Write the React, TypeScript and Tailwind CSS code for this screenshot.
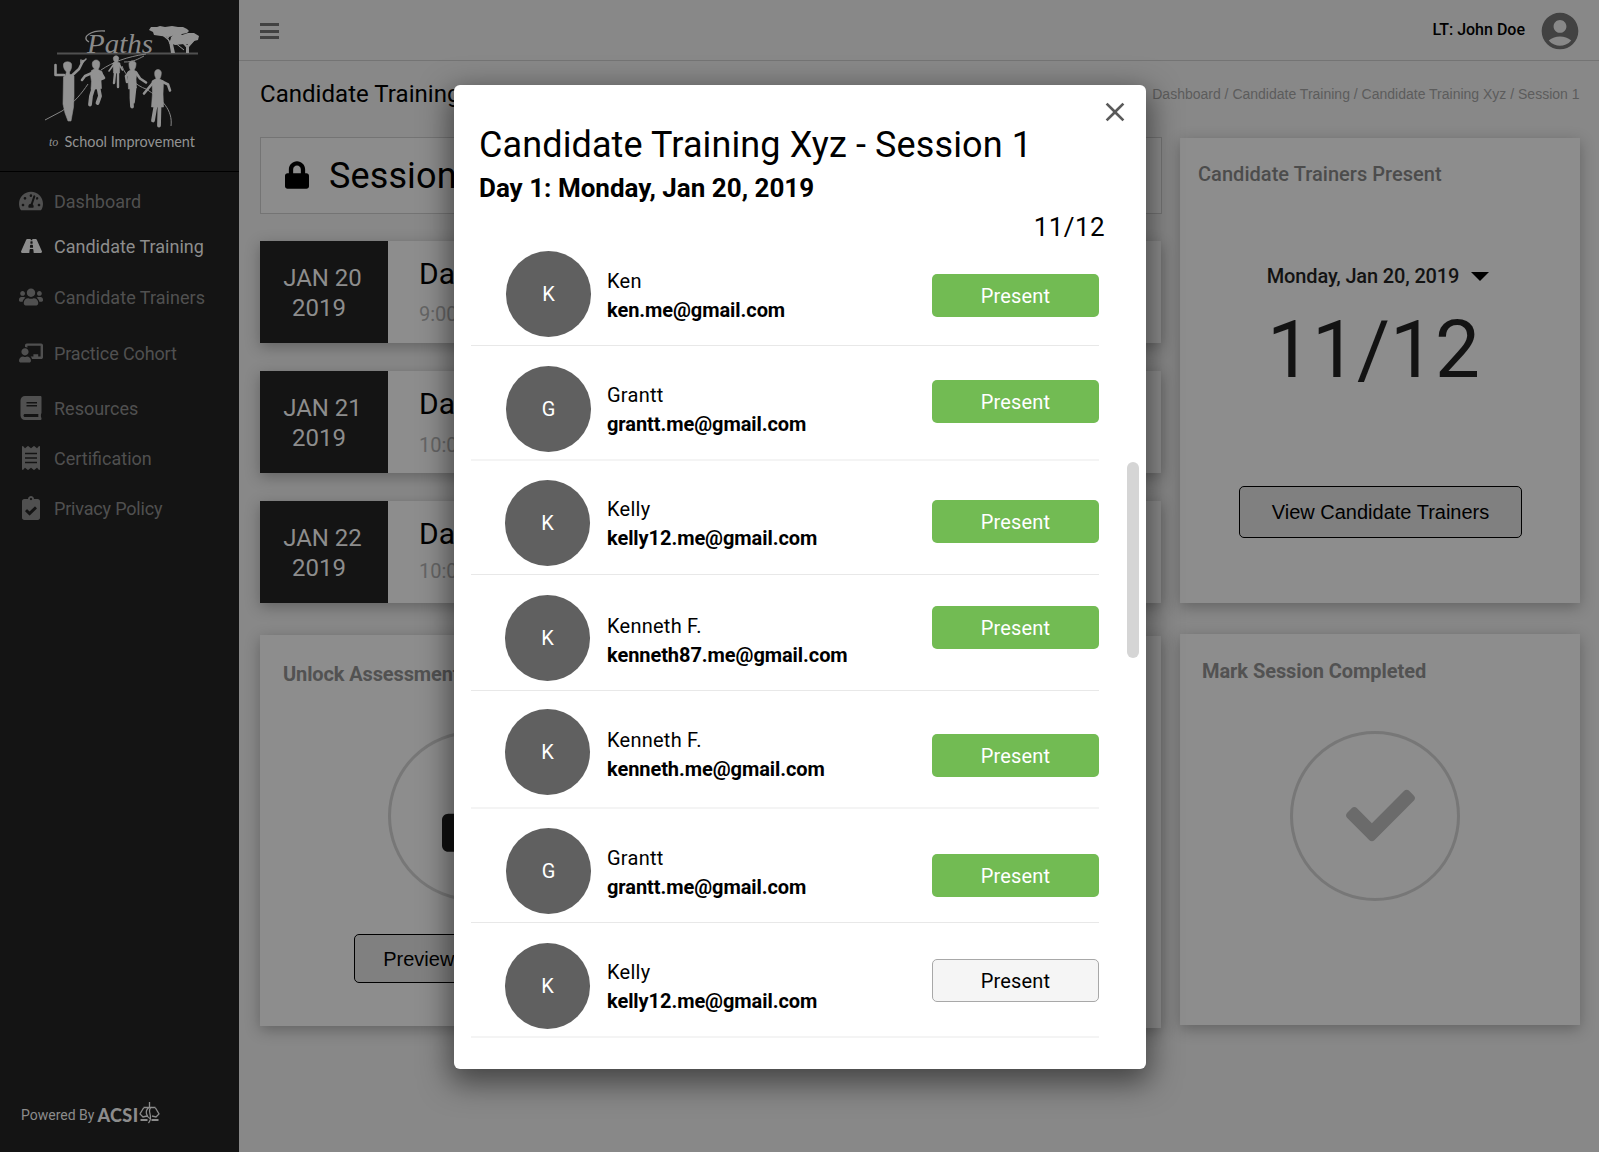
import type { ReactNode } from "react";
import {
  FaTachometerAlt,
  FaRoad,
  FaUsers,
  FaChalkboardTeacher,
  FaBook,
  FaReceipt,
  FaLock,
  FaLockOpen,
  FaCheck,
} from "react-icons/fa";
import { MdAccountCircle, MdClose } from "react-icons/md";

const roboto = "font-['Roboto',sans-serif]";
const arial = "font-['Liberation_Sans',sans-serif]";
const cardShadow = "shadow-[0_4px_14px_rgba(0,0,0,0.28)]";

function ClipboardCheck() {
  return (
    <svg viewBox="0 0 384 512" className="h-6 w-[18px]" fill="currentColor">
      <path
        fillRule="evenodd"
        d="M336 64h-80c0-35-29-64-64-64s-64 29-64 64H48C21 64 0 85 0 112v352c0 27 21 48 48 48h288c27 0 48-21 48-48V112c0-27-21-48-48-48zM192 40c13 0 24 11 24 24s-11 24-24 24-24-11-24-24 11-24 24-24zm121 231-143 142c-5 5-12 5-17 0l-82-82c-4-5-4-12 0-17l28-28c5-5 13-5 17 0l46 46 106-105c5-5 13-5 17 0l28 28c5 5 5 12 0 16z"
      />
    </svg>
  );
}

function PathsLogo() {
  return (
    <svg viewBox="0 0 239 171" className="h-[171px] w-[239px]">
      <path d="M57 53.6H198" stroke="#505050" strokeWidth="2" />
      <text
        x="87"
        y="53"
        fill="#8a8a8a"
        fontFamily="'Liberation Serif', serif"
        fontStyle="italic"
        fontSize="28"
        textLength="66"
        lengthAdjust="spacingAndGlyphs"
      >
        Paths
      </text>
      <path d="M89 42C80 37 92 30 105 31" fill="none" stroke="#8a8a8a" strokeWidth="1.3" />
      {/* acacia trees */}
      <g fill="#929292">
        <path d="M149 30l2-3 6 0 3-1 5 1 7-1 6 1 5 0 4 2 2 2-2 2-5 1-1 1-6 0-6 2-8-1-7-1-1-3z" />
        <path d="M171 37l4-3 7 1 6-2 6 0 5 3-1 4-4 1-3 3-7 0-9 1-5-2z" />
        <path d="M158 32l11 9 1 6 1 6h4l-2-9 3-9h-3l-3 6-8-9zM180 41l6 6v6h3v-6l7-8-3 0-6 6-4-5z" />
      </g>
      <g fill="none" stroke="#929292">
        <path d="M163 33l6 5M177 34l-3 8M174 42l10 8M192 40l-5 9M166 34l4 10M183 41l4 7" />
      </g>
      {/* winding path */}
      <g fill="none" stroke="#858585">
        <path d="M45 120l17-9c12-8 20-18 26-27M101 70c12-8 25-13 45-16M124 62c10 0 14-3 20-6" />
        <path d="M122 66c3 10 15 20 24 23 16 10 27 21 25 37" />
      </g>
      {/* children running: heads and torsos */}
      <g fill="#929292" stroke="#929292" strokeWidth="0.6">
        <path d="M63.500 64c1-3 7-3 8 0 .5 3-.5 6-2 8l0 2 4.500 2v20l-.5 11-2.500 14h-3l-3-8-2-9 .5-27 2-2 1-3c-2-2-3.500-5-3-8z" />
        <path d="M92.300 63c1-4 6.700-4 7.400 0 .3 3-.7 5-1.700 6.500l4 2 .5 6-1.500 3 .5 8-10.500 1 .5-8-1-7 1-4 3-1.500c-1.500-1.500-2.500-3-2.200-6z" />
        <path d="M113.300 58c.5-3 5-3 5.400 0 0 2-.7 3-1.500 4l2.800 1-.5 10h-6l-.5-10 2-1c-1-1-1.700-2-1.700-4z" />
        <path d="M129 63.500c.5-3.500 6.500-3.500 7 0 0 3-.7 5-2 6.500l3 2-1 7 .5 9-8 1-.5-9-.5-8 3-2c-1-1.500-1.500-3.500-1.500-6.500z" />
        <path d="M154.700 72.500c.5-4 6-4 6.600 0 0 3-.7 5-1.700 6.500l3.900 2-.5 13 .5 13h-12l1-14-.5-12 4.200-2.500c-1-1.500-1.700-3-1.500-6z" />
      </g>
      {/* children running: arms and legs */}
      <g fill="none" stroke="#929292" strokeLinecap="round" strokeLinejoin="round">
        <path
          strokeWidth="2.600"
          d="M64 75l-8.500 0 0-10M72 75.500l7-6.500 4-8M92 73l-7 3-3 4M101 73l3 5-4 1.500M129 72.500l-3 3.500 1 6M136 72.500l4 6 6 4M154 81.500l-5 6-5 6M162 81.500l6 3 2 6"
        />
        <path strokeWidth="1.600" d="M81 63l0-3M83 62l3-3M114 64l-5 7M119 64l3.500 6" />
        <path
          strokeWidth="3.800"
          d="M93.500 88l-2.500 8-1 8.500M98.500 88l1.500 8-2.500 7M131.500 88l0 10 .5 8.500M134.500 88l-1.500 14M155.500 106l-2.500 14.500M159.500 106l-.5 19.500"
        />
        <path strokeWidth="2.400" d="M115 73l-1 10M118 73l0 14" />
      </g>
      <text x="49" y="146" fill="#929292" fontFamily="'Liberation Serif', serif" fontStyle="italic" fontSize="12">
        to
      </text>
      <text
        x="64.500"
        y="147"
        fill="#929292"
        fontFamily="Lato, sans-serif"
        fontSize="15"
        textLength="130.500"
        lengthAdjust="spacingAndGlyphs"
      >
        School Improvement
      </text>
    </svg>
  );
}

function AcsiEmblem() {
  return (
    <svg viewBox="0 0 20 22" className="h-[22px] w-[21px]" fill="none" stroke="#8c8c8c" strokeWidth="1.300">
      <path d="M4 5.500h12M10 0v5M12 5c-6 4 3 9-3 16M9 6c-4 3-2 9 2 11M4 6l-3.500 6 3 3 4-1M16 6l3.500 6-3 3-4-1" />
      <path d="M1 18h7M12 18h7" strokeWidth="2.200" />
    </svg>
  );
}

type NavItem = { label: string; icon: ReactNode; space: string; active?: boolean };

const navItems: NavItem[] = [
  { label: "Dashboard", icon: <FaTachometerAlt className="size-6" />, space: "mt-[17px]" },
  {
    label: "Candidate Training",
    icon: <FaRoad className="h-[22px] w-[21px]" />,
    space: "mt-[21px]",
    active: true,
  },
  { label: "Candidate Trainers", icon: <FaUsers className="size-6" />, space: "mt-[27px] tracking-[0.04px]" },
  {
    label: "Practice Cohort",
    icon: <FaChalkboardTeacher className="size-6" />,
    space: "mt-8 tracking-[-0.12px]",
  },
  { label: "Resources", icon: <FaBook className="size-6" />, space: "mt-[31px]" },
  { label: "Certification", icon: <FaReceipt className="size-6" />, space: "mt-[26px]" },
  { label: "Privacy Policy", icon: <ClipboardCheck />, space: "mt-[26px] tracking-[-0.18px]" },
];

function Sidebar() {
  return (
    <aside className="flex h-full w-[239px] shrink-0 flex-col bg-[#141414]">
      <div className="h-[172px] border-b border-black">
        <PathsLogo />
      </div>
      <nav className="flex flex-col">
        {navItems.map((item) => (
          <a
            key={item.label}
            className={`flex h-6 items-center pl-[19px] text-[18px] ${item.space} ${
              item.active ? "text-[#8d8d8d]" : "text-[#505050]"
            }`}
          >
            <span className="flex w-6 justify-center">{item.icon}</span>
            <span className="ml-[11px] whitespace-nowrap">{item.label}</span>
          </a>
        ))}
      </nav>
      <div className="mt-auto mb-[25px] flex h-6 items-center pl-[21px] text-[14px] text-[#8c8c8c]">
        <span>Powered By</span>
        <span className="ml-[3px] font-['Lato',sans-serif] text-[18px] font-black tracking-[0.4px]">ACSI</span>
        <span className="mb-1">
          <AcsiEmblem />
        </span>
      </div>
    </aside>
  );
}

function Header() {
  return (
    <header className="flex h-[61px] shrink-0 items-center justify-between border-b border-[#747474] pr-[17px] pl-[21px]">
      <div className="mt-0.5 flex flex-col gap-[3.500px]">
        <span className="h-[3px] w-[19px] bg-[#424242]" />
        <span className="h-[3px] w-[19px] bg-[#424242]" />
        <span className="h-[3px] w-[19px] bg-[#424242]" />
      </div>
      <div className="flex items-center gap-[13px]">
        <span className="text-[16px] font-medium text-black">LT: John Doe</span>
        <MdAccountCircle className="mt-0.5 size-[44px] text-[#424242]" />
      </div>
    </header>
  );
}

const days = [
  { date: "JAN 20", title: "Day 1", time: "9:00 AM", gap: "mt-[9px]" },
  { date: "JAN 21", title: "Day 2", time: "10:00 AM", gap: "mt-[10px]" },
  { date: "JAN 22", title: "Day 3", time: "10:00 AM", gap: "mt-[6px]" },
];

function DayCard({ date, title, time, gap }: (typeof days)[number]) {
  return (
    <div className={`flex h-[102px] w-[901px] bg-[#8d8d8d] ${cardShadow}`}>
      <div className="w-[128px] bg-[#141414] pt-[22px] pr-[10px] pl-0 text-center text-[24px] leading-[30px] text-[#8d8d8d]">
        <div className="pl-[7px]">{date}</div>
        <div>2019</div>
      </div>
      <div className="pt-[14px] pl-[31px]">
        <div className="text-[30px] leading-[38px] text-black">{title}</div>
        <div className={`text-[20px] leading-6 text-[#656565] ${gap}`}>{time}</div>
      </div>
    </div>
  );
}

function OutlineButton({ children, size }: { children: ReactNode; size: string }) {
  return (
    <button
      className={`flex items-center justify-center rounded-[5px] border border-black bg-[#808080] text-[20px] whitespace-nowrap text-black ${arial} ${size}`}
    >
      {children}
    </button>
  );
}

function Ring({ children }: { children?: ReactNode }) {
  return (
    <div className="flex size-[170px] items-center justify-center rounded-full border-[3px] border-[#777777]">
      {children}
    </div>
  );
}

function Page() {
  return (
    <main className="flex min-w-0 flex-1 flex-col bg-[#888888]">
      <Header />
      <div className="mt-[17px] flex h-8 items-center justify-between pr-[19.500px] pl-[21px]">
        <h1 className="text-[24px] tracking-[0.04px] text-black">Candidate Training Xyz - Session 1</h1>
        <span className={`text-[14px] text-[#5c5c5c] ${arial}`}>
          Dashboard / Candidate Training / Candidate Training Xyz / Session 1
        </span>
      </div>
      <div className="mt-[27px] flex pl-[21px]">
        <section className="flex w-[902px] flex-col">
          <div className="flex h-[77px] items-center border border-[#747474] bg-[#8c8c8c] pl-6">
            <FaLock className="mb-0.5 h-7 w-6 text-black" />
            <span className="ml-5 text-[36px] leading-none tracking-[0.12px] text-black">Session 1</span>
          </div>
          <div className="mt-[27px] flex flex-col gap-7">
            {days.map((d) => (
              <DayCard key={d.date} {...d} />
            ))}
          </div>
          <div className="mt-8 flex w-[901px] items-start justify-between">
            <div className={`flex h-[391px] w-[426px] flex-col items-center bg-[#8d8d8d] ${cardShadow}`}>
              <h2 className="mt-[27px] w-full pl-[23px] text-[20px] leading-6 font-bold tracking-[-0.12px] text-[#525252]">
                Unlock Assessment
              </h2>
              <div className="mt-[45px]">
                <Ring>
                  <FaLockOpen className="mt-1 ml-[14px] h-[68px] w-[76px] text-[#101010]" />
                </Ring>
              </div>
              <div className="mt-[33px]">
                <OutlineButton size="h-[49px] w-[238px] pl-[5px]">Preview Assessment</OutlineButton>
              </div>
            </div>
            <div className={`mt-px h-[392px] w-[426px] bg-[#8d8d8d] ${cardShadow}`} />
          </div>
        </section>
        <section className="ml-[18px] flex w-[400px] flex-col pt-px">
          <div className={`flex h-[465px] flex-col items-center bg-[#8d8d8d] ${cardShadow}`}>
            <h2 className="mt-6 w-full pl-[18px] text-[20px] leading-6 font-medium tracking-[0.04px] text-[#4c4c4c]">
              Candidate Trainers Present
            </h2>
            <div className="mt-[78px] flex items-center pr-1 text-[20px] leading-6 font-medium tracking-[-0.15px] text-[#131313]">
              Monday, Jan 20, 2019
              <span className="ml-3 border-x-[9px] border-t-[9px] border-x-transparent border-t-black" />
            </div>
            <div className="mt-[15px] pr-[13px] text-[80px] leading-[94px] text-[#131313]">11/12</div>
            <div className="mt-[89px]">
              <OutlineButton size="h-[52px] w-[283px] pl-px">View Candidate Trainers</OutlineButton>
            </div>
          </div>
          <div className={`mt-[31px] flex h-[391px] flex-col bg-[#8d8d8d] ${cardShadow}`}>
            <h2 className="mt-[25px] pl-[22px] text-[20px] leading-6 font-bold tracking-[-0.06px] text-[#525252]">
              Mark Session Completed
            </h2>
            <div className="mt-[48px] ml-[110px]">
              <Ring>
                <FaCheck className="mb-0.5 ml-[10px] size-[69px] text-[#6b6b6b]" />
              </Ring>
            </div>
          </div>
        </section>
      </div>
    </main>
  );
}

type Trainer = {
  name: string;
  email: string;
  row: string;
  avatar: string;
  text: string;
  button: string;
  pending?: boolean;
};

const trainers: Trainer[] = [
  { name: "Ken", email: "ken.me@gmail.com", row: "h-[100px] border-b border-[#e8e8e8]", avatar: "mt-[5px] ml-[35px] mr-4", text: "mt-[21px]", button: "mt-7" },
  { name: "Grantt", email: "grantt.me@gmail.com", row: "h-[115px] border-b-2 border-[#f4f4f4]", avatar: "mt-[19.500px] ml-[35px] mr-4", text: "mt-[35px]", button: "mt-[34px]" },
  { name: "Kelly", email: "kelly12.me@gmail.com", row: "h-[114px] border-b border-[#e8e8e8]", avatar: "mt-[19px] ml-[34px] mr-[17px]", text: "mt-[34px]", button: "mt-[39px]" },
  { name: "Kenneth F.", email: "kenneth87.me@gmail.com", row: "h-[116px] border-b border-[#e8e8e8]", avatar: "mt-5 ml-[34px] mr-[17px]", text: "mt-[37px]", button: "mt-[31px]" },
  { name: "Kenneth F.", email: "kenneth.me@gmail.com", row: "h-[118px] border-b-2 border-[#f4f4f4]", avatar: "mt-[18px] ml-[34px] mr-[17px]", text: "mt-[35px]", button: "mt-[43px]" },
  { name: "Grantt", email: "grantt.me@gmail.com", row: "h-[114px] border-b border-[#e8e8e8]", avatar: "mt-[19px] ml-[35px] mr-4", text: "mt-[35px]", button: "mt-[45px]" },
  { name: "Kelly", email: "kelly12.me@gmail.com", row: "h-[115px] border-b-2 border-[#f4f4f4]", avatar: "mt-[19.500px] ml-[34px] mr-[17px]", text: "mt-[35px]", button: "mt-9", pending: true },
];

function TrainerRow({ t }: { t: Trainer }) {
  return (
    <li className={`flex w-[628px] items-start ${t.row}`}>
      <div
        className={`flex h-[86px] w-[85px] shrink-0 items-center justify-center rounded-full bg-[#606060] text-[20px] text-white ${t.avatar}`}
      >
        {t.name[0]}
      </div>
      <div className={`flex-1 text-[20px] leading-[29px] text-black ${t.text}`}>
        <div className="tracking-[0.25px]">{t.name}</div>
        <div className="font-bold tracking-[-0.07px]">{t.email}</div>
      </div>
      <button
        className={`h-[43px] w-[167px] rounded-[5px] text-[20px] tracking-[0.2px] ${t.button} ${
          t.pending ? "border border-[#a8a8a8] bg-[#f5f5f5] text-black" : "bg-[#72bb53] text-white"
        }`}
      >
        Present
      </button>
    </li>
  );
}

function AttendanceDialog() {
  return (
    <div className="absolute inset-0 flex justify-center pt-[85px] pl-px">
      <div
        role="dialog"
        className="relative h-[984px] w-[692px] rounded-[6px] bg-white shadow-[0_10px_30px_4px_rgba(0,0,0,0.5)]"
      >
        <button className="absolute top-[11px] right-[15.500px] text-[#5a5a5a]">
          <MdClose className="size-8" />
        </button>
        <div className="h-[161px] pt-[38px] pr-[41px] pl-[25px] text-black">
          <h2 className="text-[36px] leading-[44px] tracking-[0.11px]">Candidate Training Xyz - Session 1</h2>
          <p className="mt-[6px] text-[26px] leading-[30px] font-bold">Day 1: Monday, Jan 20, 2019</p>
          <p className="mt-[9px] text-right text-[26px] leading-[30px] tracking-[0.4px]">11/12</p>
        </div>
        <ul className="pl-[17px]">
          {trainers.map((t, i) => (
            <TrainerRow key={i} t={t} />
          ))}
        </ul>
        <div className="absolute top-[377px] right-[7px] h-[196px] w-3 rounded-full bg-[#d5d5d5]" />
      </div>
    </div>
  );
}

export default function App() {
  return (
    <div className={`relative flex h-[1152px] w-[1599px] overflow-hidden ${roboto}`}>
      <Sidebar />
      <Page />
      <AttendanceDialog />
    </div>
  );
}
